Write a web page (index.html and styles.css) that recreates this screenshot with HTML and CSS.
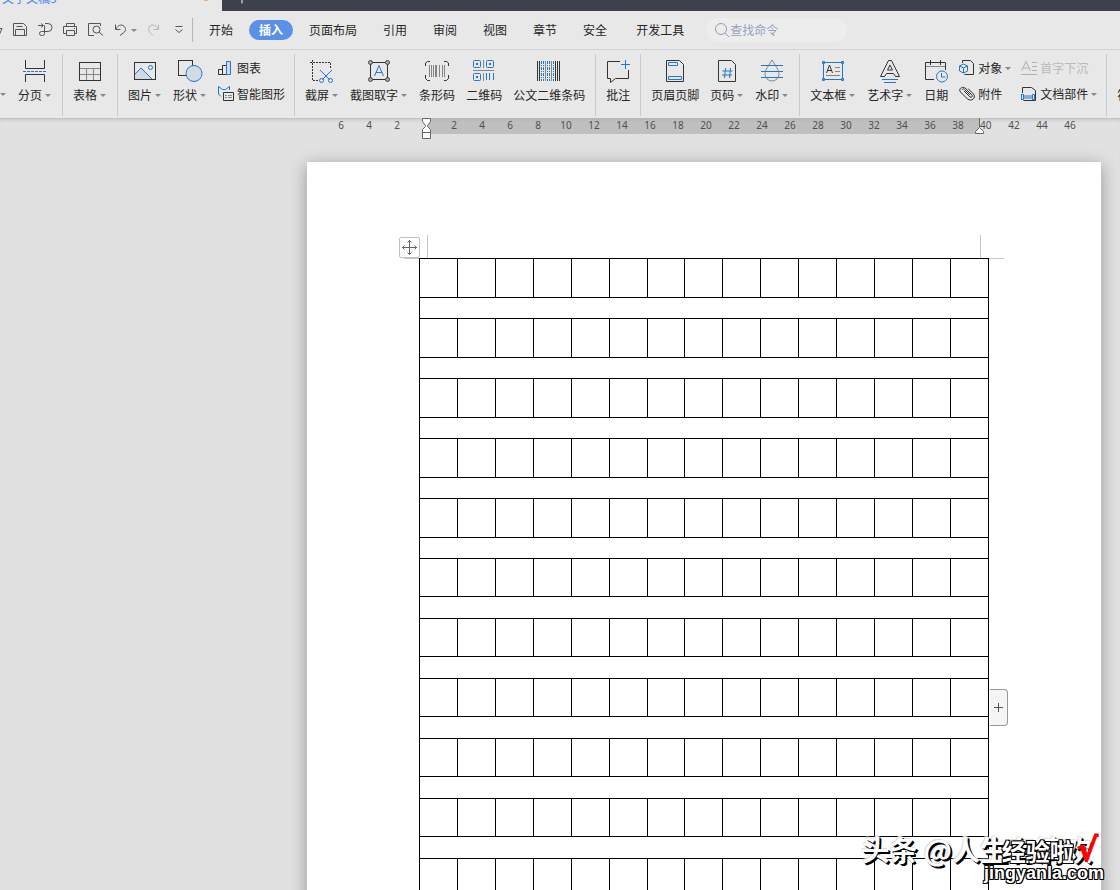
FILE: index.html
```html
<!DOCTYPE html>
<html lang="zh-CN">
<head>
<meta charset="utf-8">
<title>文字文稿3</title>
<link rel="stylesheet" href="styles.css">
</head>
<body>
<header class="titlebar">
  <div class="doc-tab"><span class="doc-name">文字文稿3</span><span class="unsaved"></span></div>
  <button class="new-tab" aria-label="新建">+</button>
</header>

<nav class="menubar">
  <div class="quick">
    <button aria-label="打开"><svg class="ic16" viewBox="0 0 16 16"><path d="M1.500 13.500V2.500h5l2 2h4v3M8 13.500h4l3-7h-3"/></svg></button>
    <button aria-label="保存"><svg class="ic16" viewBox="0 0 16 16"><path d="M1.500 1.500h10l3 3v9h-13zM3.500 13.500v-6h9v6M4.500 4.500h6"/></svg></button>
    <button aria-label="输出"><svg class="ic16" viewBox="0 0 16 16"><path d="M1 3.500h5M4 1.500l2.500 2L4 5.500M8 1.500h3a3.500 3.500 0 0 1 0 8H4.500M7.500 3.500v8a2 2 0 0 1-2 2h-1a2 2 0 0 1 0-4"/></svg></button>
    <button aria-label="打印"><svg class="ic16" viewBox="0 0 16 16"><path d="M4.500 4.500v-3h8v3M4.500 11.500h-3v-7h13v7h-2M4.500 8.500h8v5h-8zM12 6.500h1"/></svg></button>
    <button aria-label="打印预览"><svg class="ic16" viewBox="0 0 16 16"><path d="M13.500 4V1.500h-12v12H7"/><circle cx="9.500" cy="7.500" r="3.500"/><path d="M12 10l4 3.500"/></svg></button>
    <button aria-label="撤销"><svg class="ic16" viewBox="0 0 16 16"><path d="M3.500 2.500v5h5M4 7C6 3 9 2.500 11 3.500c3 1.500 3 4.500 1.500 6.500L8 13.500"/></svg><span class="arrow"></span></button>
    <button class="off" aria-label="恢复"><svg class="ic16" viewBox="0 0 16 16"><path d="M12.500 2.500v5h-5M12 7C10 3 7 2.500 5 3.500C2 5 2 8 3.500 10L7 13.500"/></svg></button>
    <button aria-label="自定义"><svg class="ic16" viewBox="0 0 16 16"><path d="M4.500 4.500h7M4.500 7.500l3.500 3 3.500-3"/></svg></button>
  </div>
  <div class="menus">
    <a href="#">开始</a><a href="#" class="on">插入</a><a href="#">页面布局</a><a href="#">引用</a><a href="#">审阅</a><a href="#">视图</a><a href="#">章节</a><a href="#">安全</a><a href="#" class="dev">开发工具</a>
  </div>
  <label class="search"><svg class="ic16" viewBox="0 0 16 16"><circle cx="7" cy="7" r="5.500"/><path d="M11 11l4 4"/></svg><input type="text" placeholder="查找命令" aria-label="查找命令"></label>
</nav>

<div class="ribbon">
  <section class="group first">
    <button class="cut" aria-label="封面页"><span class="arrow"></span></button>
    <button class="big"><svg class="ic24" viewBox="0 0 24 24"><path d="M2.500 0v8.500h19V0M2.500 22v-7.500h19V22"/><path class="b" stroke-dasharray="3 1" d="M0 11.500h24"/></svg><span class="cap">分页<i class="arrow"></i></span></button>
  </section>
  <section class="group">
    <button class="big"><svg class="ic24" viewBox="0 0 24 24"><path class="g" d="M2 8.500h20M2 14.500h20M8.500 8v12M15.500 8v12"/><rect x="1.500" y="2.500" width="21" height="18"/></svg><span class="cap">表格<i class="arrow"></i></span></button>
  </section>
  <section class="group">
    <button class="big"><svg class="ic24" viewBox="0 0 24 24"><path class="f" d="M2 14l6-6 11 11H2z" stroke="none"/><path class="b" d="M2 14l6-6 11 11"/><rect x="1.500" y="2.500" width="21" height="17"/><circle class="b" cx="17.500" cy="7.500" r="2"/></svg><span class="cap">图片<i class="arrow"></i></span></button>
    <button class="big"><svg class="ic24" viewBox="0 0 24 24"><rect x=".5" y=".5" width="14" height="15"/><circle class="b f" cx="16" cy="13.500" r="8"/></svg><span class="cap">形状<i class="arrow"></i></span></button>
    <div class="stack">
      <button class="small"><svg class="ic16" viewBox="0 0 16 16"><path d="M.5 9.500h4v5h-4zM4.500 5.500h4v9h-4z"/><path class="b f" d="M8.500 1.500h4v13h-4z"/></svg>图表</button>
      <button class="small"><svg class="ic16" viewBox="0 0 16 16"><path class="b" d="M3 10.500L.5 8V.5l4 3h3l4-3V4"/><path d="M5.500 6.500h10v8h-10z"/><path class="g" d="M7 9.500h2M10 9.500h4M7 11.500h2M10 11.500h4"/></svg>智能图形</button>
    </div>
  </section>
  <section class="group">
    <button class="big"><svg class="ic24" viewBox="0 0 24 24"><path stroke-dasharray="2 1" d="M0 2.500h20.500V9M2.500 0v20.500H8"/><path class="b" d="M10 10l9.500 9.500M22 10l-9.500 9.500"/><circle class="b" cx="11.500" cy="20.500" r="2"/><circle class="b" cx="20.500" cy="20.500" r="2"/></svg><span class="cap">截屏<i class="arrow"></i></span></button>
    <button class="big"><svg class="ic24" viewBox="0 0 24 24"><rect x="3.500" y="2.500" width="17" height="17"/><g class="dots"><circle cx="3.500" cy="2.500" r="2"/><circle cx="20.500" cy="2.500" r="2"/><circle cx="3.500" cy="19.500" r="2"/><circle cx="20.500" cy="19.500" r="2"/></g><path class="b" d="M7.500 16L12 5.500 16.500 16M9 12.500h6"/></svg><span class="cap">截图取字<i class="arrow"></i></span></button>
    <button class="big"><svg class="ic24" viewBox="0 0 24 24"><path d="M.5 6V3l2-1.500H5M19 1.500h2.500l2 1.500v3M.5 15v3.500l2 2H5M19 20.500h2.500l2-2V15"/><path class="g" d="M4.500 5v12M6.500 5v12M8.500 5v12M10.500 5v12M11.500 5v12M14.500 5v12M17.500 5v12M19.500 5v12"/></svg><span class="cap">条形码</span></button>
    <button class="big"><svg class="ic24" viewBox="0 0 24 24"><g class="b"><rect x="1.500" y=".5" width="7" height="7" rx="1"/><rect x="14.500" y=".5" width="7" height="7" rx="1"/><rect x="1.500" y="13.500" width="7" height="7" rx="1"/><path stroke-width="2" d="M4 4h2M17 4h2M4 17h2"/><path d="M14.500 13v7M17.500 13v7M21.500 13v7"/></g><path class="g" d="M11.500 0v8M1 10.500h21M11.500 13v8"/></svg><span class="cap">二维码</span></button>
    <button class="big"><svg class="ic24" viewBox="0 0 24 24"><path d="M.5 1v20M2.500 1v20M18.500 1v20M20.500 1v20M22.500 1v20"/><path class="g" d="M8.500 1v20M14.500 1v20"/><path class="b" stroke-dasharray="3 1 1 1" d="M4.500 1v20M6.500 1v20M10.500 1v20M12.500 1v20M16.500 1v20"/></svg><span class="cap">公文二维条码</span></button>
  </section>
  <section class="group">
    <button class="big"><svg class="ic24" viewBox="0 0 24 24"><path d="M14 1.500H1.500v17h3v4l5-4h13V10"/><path class="b" d="M19.500 0v9M15 4.500h9"/></svg><span class="cap">批注</span></button>
  </section>
  <section class="group">
    <button class="big"><svg class="ic24" viewBox="0 0 24 24"><path d="M3.500.5h13l4 4v17h-17z"/><path class="b" d="M5.500 2.500h9v3h-9zM5.500 16.500h13v3h-13z"/></svg><span class="cap">页眉页脚</span></button>
    <button class="big"><svg class="ic24" viewBox="0 0 24 24"><path d="M3.500.5h13l4 4v17h-17z"/><path class="b" d="M10.500 8l-1 10M15.500 8l-1 10M7.500 11h10M7 15h10"/></svg><span class="cap">页码<i class="arrow"></i></span></button>
    <button class="big"><svg class="ic24" viewBox="0 0 24 24"><path class="g" d="M12 0C9 5 5 10 5 14a7 7 0 0 0 14 0C19 10 15 5 12 0z"/><path class="b" d="M1 5.500h22M1 11.500h22M1 17.500h22"/></svg><span class="cap">水印<i class="arrow"></i></span></button>
  </section>
  <section class="group">
    <button class="big"><svg class="ic24" viewBox="0 0 24 24"><path class="b" d="M2.500 2.500h19v17h-19zM1.500 1.500h2v2h-2zM20.500 1.500h2v2h-2zM1.500 18.500h2v2h-2zM20.500 18.500h2v2h-2z"/><path d="M5.500 13L8.500 5l3 8M6.500 10.500h4"/><path class="g" d="M14 7.500h5M14 11.500h5M5 15.500h14"/></svg><span class="cap">文本框<i class="arrow"></i></span></button>
    <button class="big"><svg class="ic24" viewBox="0 0 24 24"><path d="M10.500.5h3L21.500 16.500h-4l-2-3h-7l-2 3h-4zM12 5l-2.500 5h5z"/><path class="b" d="M4 19.500h16M6 22.500h12"/></svg><span class="cap">艺术字<i class="arrow"></i></span></button>
    <button class="big"><svg class="ic24" viewBox="0 0 24 24"><path d="M10 19.500H1.500v-17h20V10M6.500 0v5M16.500 0v5"/><path class="g" d="M2 6.500h19"/><circle class="b" cx="18" cy="16.500" r="5.500"/><path class="b" d="M17.500 13v4h4"/></svg><span class="cap">日期</span></button>
    <div class="stack">
      <button class="small"><svg class="ic16" viewBox="0 0 16 16"><path d="M3.500 3V.5h8l3 3v11h-9"/><path class="b" d="M4.500 4l4 2v5l-4 2-4-2V6zM.5 6l4 2 4-2M4.500 8v5"/></svg>对象<i class="arrow"></i></button>
      <button class="small"><svg class="ic16" viewBox="0 0 16 16"><path d="M5 5l6 6c2 1 3-1 2-2L6 2C3 0-1 3 1.500 6l7 7c4 3 9-1 6-5L9 2.500M3 4c1-2 2-1 3 0l5 5"/></svg>附件</button>
    </div>
    <div class="stack">
      <button class="small" disabled><svg class="ic16" viewBox="0 0 16 16"><path d="M.5 11L5 1.500 9.500 11M2 8h6M11 2.500h5M11 6.500h5M11 10.500h5M0 14.500h16"/></svg>首字下沉</button>
      <button class="small"><svg class="ic16" viewBox="0 0 16 16"><path d="M1.500 7V1.500h9l4 3v10h-12"/><path class="b" d="M.5 8v6M.5 8.500h2v5h-2M13.500 8.500h-2v5h2zM2.500 10h9M2.500 12h9"/></svg>文档部件<i class="arrow"></i></button>
    </div>
  </section>
  <section class="group">
    <button class="big"><svg class="ic24" viewBox="0 0 24 24"></svg><span class="cap">符号<i class="arrow"></i></span></button>
  </section>
</div>

<main class="workspace">
  <div class="ruler">
    <div class="scale before"><span>6</span><span>4</span><span>2</span></div>
    <div class="scale active"><span>2</span><span>4</span><span>6</span><span>8</span><span>10</span><span>12</span><span>14</span><span>16</span><span>18</span><span>20</span><span>22</span><span>24</span><span>26</span><span>28</span><span>30</span><span>32</span><span>34</span><span>36</span><span>38</span>
      <svg class="indent" viewBox="0 0 9 22"><path d="M.5.5h8v3l-3 4v1l3 3v9h-8v-9l3-3v-1l-3-4zM.5 14.500h8"/></svg>
      <svg class="right-indent" viewBox="0 0 9 16"><path d="M4.500 0v9"/><path d="M4.500 9.500l4 4v2h-8v-2z"/></svg>
    </div>
    <div class="scale after"><span>40</span><span>42</span><span>44</span><span>46</span></div>
  </div>
  <article class="page">
    <div class="corners">
      <button class="move" aria-label="移动表格"><svg viewBox="0 0 15 15"><path d="M7.500 0v15M0 7.500h15M5.500 2.500l2-2 2 2M5.500 12.500l2 2 2-2M2.500 5.500l-2 2 2 2M12.500 5.500l2 2-2 2"/></svg></button>
      <div class="text-width"></div>
    </div>
    <div class="grid-wrap">
      <table class="grid">
        <tbody id="rows"></tbody>
      </table>
      <button class="add" aria-label="添加列"><svg viewBox="0 0 11 11"><path d="M5.500 1v9M1 5.500h9"/></svg></button>
    </div>
  </article>
</main>

<div class="mark author">头条 @人生有清欢</div>
<div class="mark site"><span class="site-name">经验啦<b>√</b></span><span class="site-url">jingyanla.com</span></div>
<script src="grid.js"></script>
</body>
</html>
```
FILE: styles.css
```css
* { box-sizing: border-box; }
body {
  margin: 0;
  height: 100vh;
  overflow: hidden;
  position: relative;
  display: flex;
  flex-direction: column;
  background: #e1e1e1;
  color: #262626;
  font: 12px/14px "Noto Sans CJK SC", sans-serif;
}
button {
  margin: 0;
  padding: 0;
  border: 0;
  background: none;
  color: inherit;
  font: inherit;
  white-space: nowrap;
}
svg { fill: none; stroke: #333; flex: none; display: block; overflow: visible; }
.ic16 { width: 16px; height: 16px; }
.ic24 { width: 24px; height: 24px; }
.b { stroke: #2277cc; }
.g { stroke: #858585; }
.f { fill: #d0dbe6; }
.arrow {
  width: 6px;
  flex: none;
  margin: 0 1px 0 3px;
  border: solid transparent;
  border-width: 3px 3px 0;
  border-top-color: #888;
}

.titlebar { display: flex; height: 11px; flex: none; background: #3d414e; overflow: hidden; }
.doc-tab { display: flex; width: 222px; justify-content: space-between; padding: 0 13px 0 2px; background: #e8e8e8; color: #4a86e8; }
.doc-name { margin-top: -9px; }
.unsaved { width: 6px; height: 6px; margin-top: -5px; border-radius: 3px; background: #f0a060; }
.new-tab { width: 40px; margin-top: -9px; height: 14px; color: #ccc; font-size: 16px; line-height: 14px; }

.menubar { display: flex; align-items: center; height: 39px; flex: none; background: #e8e8e8; border-bottom: 1px solid #d3d3d3; overflow: hidden; }
.quick { display: flex; gap: 9px; margin-left: -13px; padding-right: 5px; height: 24px; align-items: center; border-right: 1px solid #b5b5b5; }
.quick button { display: flex; align-items: center; }
.quick .arrow { margin-right: 0; }
.quick svg { stroke: #555; }
.quick .off svg { stroke: #b5b5b5; }
.menus { display: flex; padding-left: 6px; gap: 6px; }
.menus a { padding: 3px 10px; border-radius: 10px; color: inherit; text-decoration: none; white-space: nowrap; }
.menus .on { background: #5b90e9; color: #fff; font-weight: bold; }
.menus .dev { margin-left: 3px; }
.search { display: flex; align-items: center; width: 140px; height: 24px; margin-left: 13px; padding-left: 7px; border-radius: 12px; background: #ededed; }
.search svg { stroke: #8d9dba; }
.search input { flex: 1; min-width: 0; padding: 0; border: 0; background: none; font: inherit; outline: 0; }
.search input::placeholder { color: #94a2bd; }

.ribbon { display: flex; height: 68px; flex: none; background: #e8e8e8; overflow: hidden; }
.group { display: flex; flex: none; height: 62px; margin-top: 4px; padding: 0 5px 0 4px; border-right: 1px solid #cacaca; }
.group.first { padding-left: 0; }
.cut { display: flex; padding: 39px 6px 0 0; align-items: flex-start; }
.cut .arrow { margin-left: 0; margin-right: 0; }
.big { display: flex; flex-direction: column; align-items: center; gap: 4px; padding: 6px 5px 0 6px; }
.cap { display: flex; align-items: center; }
.stack { display: flex; flex-direction: column; padding-top: 1px; }
.small { display: flex; align-items: center; gap: 3px; height: 26px; padding: 0 4px 0 6px; }
.small .arrow { margin: 0; }
.small:disabled { color: #b9b9b9; }
.small:disabled svg { stroke: #b0b0b0; }
.dots { fill: #aaa; stroke: #444; }

.workspace { flex: 1; min-height: 0; overflow: hidden; padding-right: 19px; display: flex; flex-direction: column; align-items: flex-end; box-shadow: inset 0 4px 4px -3px rgba(0, 0, 0, .2); }
.ruler { display: flex; flex: none; width: 794px; height: 16px; color: #505050; font: 10px/14px "Noto Sans", sans-serif; }
.scale { display: flex; position: relative; }
.scale span { width: 28px; flex: none; text-align: center; }
.before { padding: 0 15px 0 20px; }
.active { padding: 0 8px 0 14px; background: linear-gradient(#b5b5b5, #bfbfbf 4px); }
.after span:first-child { width: 20px; text-align: left; }
.indent, .right-indent { position: absolute; z-index: 1; fill: #fff; stroke: #666; }
.indent { width: 9px; height: 22px; left: -4px; top: 0; }
.right-indent { width: 9px; height: 16px; right: -4px; top: 0; }

.page { flex: none; width: 794px; min-height: 1123px; margin-top: 28px; padding-top: 73px; background: #fff; box-shadow: 0 4px 16px 1px rgba(0, 0, 0, .3); }
.corners { display: flex; position: relative; align-items: flex-end; gap: 7px; padding-left: 92px; height: 23px; }
.corners::after { content: ""; position: absolute; left: 97px; right: 97px; bottom: -1px; border-bottom: 1px solid #c6c6c6; }
.move { width: 21px; height: 21px; padding: 2px; border: 1px solid #c0c0c0; border-radius: 2px; background: #fff; }
.move svg { width: 15px; height: 15px; stroke: #666; }
.text-width { width: 554px; height: 23px; border: solid #c6c6c6; border-width: 0 1px; }
.grid-wrap { position: relative; width: 570px; margin-left: 112px; }
.grid { width: 100%; border-collapse: collapse; table-layout: fixed; }
.grid td { padding: 0; border: 1px solid #000; }
.cells td { height: 39px; }
.gap td { height: 21px; }
.cells:nth-child(n+11) td { height: 38px; }
.gap:nth-child(n+11) td { height: 22px; }
.add { position: absolute; left: 571px; top: 431px; width: 18px; height: 37px; padding: 0 0 0 3px; border: 1px solid #999; border-left: 0; border-radius: 0 4px 4px 0; background: #f5f5f5; }
.add svg { width: 11px; height: 11px; stroke: #555; }

.mark { position: absolute; color: #fff; white-space: nowrap; }
.author { right: 28px; bottom: 25px; font-size: 28px; line-height: 32px; font-weight: bold; text-shadow: 1px 1px 0 #000, 2px 2px 0 #000, -1px -1px 1px #ddd; }
.site { right: 16px; bottom: 8px; display: flex; flex-direction: column; align-items: flex-end; text-shadow: -1px -1px 0 #000, 1px -1px 0 #000, -1px 1px 0 #000, 1px 1px 0 #000, 0 1px 0 #000, 1px 0 0 #000; }
.site-name { padding-right: 6px; font-size: 24px; line-height: 26px; font-weight: bold; }
.site-name b { color: #f00; text-shadow: none; font: bold 32px/26px "DejaVu Sans", sans-serif; -webkit-text-stroke: 1px #f00; margin-left: 3px; }
.site-url { font: bold 18px/18px "Liberation Sans", sans-serif; }
```
FILE: grid.js
```js
const rows = document.getElementById("rows");
for (let r = 0; r < 12; r++) {
  const cells = rows.insertRow();
  cells.className = "cells";
  for (let c = 0; c < 15; c++) cells.insertCell();
  const gap = rows.insertRow();
  gap.className = "gap";
  gap.insertCell().colSpan = 15;
}
```
